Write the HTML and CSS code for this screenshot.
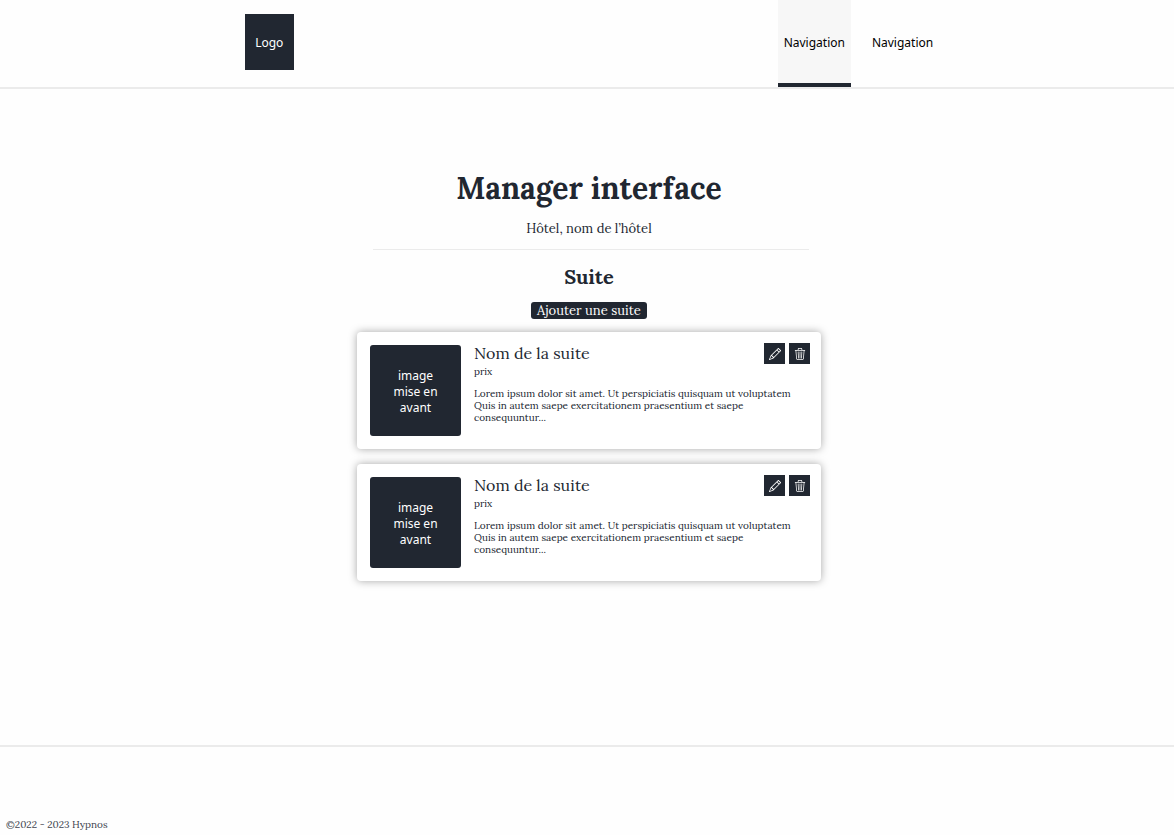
FILE: index.html
```html
<!DOCTYPE html>
<html lang="fr">
<head>
<meta charset="utf-8">
<meta name="viewport" content="width=device-width, initial-scale=1">
<title>Manager interface - Hypnos</title>
<link rel="stylesheet" href="styles.css">
</head>
<body>
<svg class="sprite" aria-hidden="true">
  <symbol id="pencil" viewBox="0 0 16 16"><path d="M12.146.146a.5.5 0 0 1 .708 0l3 3a.5.5 0 0 1 0 .708l-10 10a.5.5 0 0 1-.168.11l-5 2a.5.5 0 0 1-.65-.65l2-5a.5.5 0 0 1 .11-.168l10-10zM11.207 2.5 13.5 4.793 14.793 3.5 12.5 1.207 11.207 2.5zm1.586 3L10.5 3.207 4 9.707V10h.5a.5.5 0 0 1 .5.5v.5h.5a.5.5 0 0 1 .5.5v.5h.293l6.5-6.5zm-9.761 5.175-.106.106-1.528 3.821 3.821-1.528.106-.106A.5.5 0 0 1 5 12.5V12h-.5a.5.5 0 0 1-.5-.5V11h-.5a.5.5 0 0 1-.468-.325z"/></symbol>
  <symbol id="trash" viewBox="0 0 16 16"><path d="M6.5 1h3a.5.5 0 0 1 .5.5v1H6v-1a.5.5 0 0 1 .5-.5ZM11 2.5v-1A1.5 1.5 0 0 0 9.5 0h-3A1.5 1.5 0 0 0 5 1.500v1H2.506a.58.58 0 0 0-.01 0H1.500a.5.5 0 0 0 0 1h.538l.853 10.660A2 2 0 0 0 4.885 16h6.230a2 2 0 0 0 1.994-1.840l.853-10.660h.538a.5.5 0 0 0 0-1h-.995a.59.59 0 0 0-.01 0H11Zm1.958 1-.846 10.580a1 1 0 0 1-.997.920h-6.230a1 1 0 0 1-.997-.920L3.042 3.500h9.916Zm-7.487 1a.5.5 0 0 1 .528.470l.5 8.500a.5.5 0 0 1-.998.060L5 5.030a.5.5 0 0 1 .470-.530Zm5.058 0a.5.5 0 0 1 .470.530l-.5 8.500a.5.5 0 1 1-.998-.060l.5-8.500a.5.5 0 0 1 .528-.470ZM8 4.500a.5.5 0 0 1 .5.5v8.500a.5.5 0 0 1-1 0V5a.5.5 0 0 1 .5-.5Z"/></symbol>
</svg>
<header class="header">
  <div class="header-inner">
    <a class="logo" href="#">Logo</a>
    <nav class="nav">
      <a class="nav-link active" href="#" aria-current="page">Navigation</a>
      <a class="nav-link" href="#">Navigation</a>
    </nav>
  </div>
</header>
<main class="main">
  <h1 class="title">Manager interface</h1>
  <p class="hotel">Hôtel, nom de l’hôtel</p>
  <hr class="divider">
  <h2 class="subtitle">Suite</h2>
  <button class="add" type="button">Ajouter une suite</button>
  <div class="cards">
    <article class="card">
      <div class="thumb">image mise en avant</div>
      <div class="info">
        <div class="card-head">
          <div>
            <h3 class="name">Nom de la suite</h3>
            <p class="price">prix</p>
          </div>
          <div class="actions">
            <button class="action" type="button" aria-label="Modifier"><svg class="icon"><use href="#pencil"/></svg></button>
            <button class="action" type="button" aria-label="Supprimer"><svg class="icon"><use href="#trash"/></svg></button>
          </div>
        </div>
        <p class="text">Lorem ipsum dolor sit amet. Ut perspiciatis quisquam ut voluptatem<br>Quis in autem saepe exercitationem praesentium et saepe<br>consequuntur...</p>
      </div>
    </article>
    <article class="card">
      <div class="thumb">image mise en avant</div>
      <div class="info">
        <div class="card-head">
          <div>
            <h3 class="name">Nom de la suite</h3>
            <p class="price">prix</p>
          </div>
          <div class="actions">
            <button class="action" type="button" aria-label="Modifier"><svg class="icon"><use href="#pencil"/></svg></button>
            <button class="action" type="button" aria-label="Supprimer"><svg class="icon"><use href="#trash"/></svg></button>
          </div>
        </div>
        <p class="text">Lorem ipsum dolor sit amet. Ut perspiciatis quisquam ut voluptatem<br>Quis in autem saepe exercitationem praesentium et saepe<br>consequuntur...</p>
      </div>
    </article>
  </div>
</main>
<footer class="footer">©2022 - 2023 Hypnos</footer>
</body>
</html>
```

FILE: styles.css
```css
* {
  box-sizing: border-box;
}

body {
  display: flex;
  flex-direction: column;
  min-height: 100vh;
  margin: 0;
  background: #fefefe;
  color: #212731;
  font-family: Lora, "Liberation Serif", serif;
}

.sprite {
  display: none;
}

.header {
  border-bottom: 2px solid #ebebeb;
}

.header-inner {
  display: flex;
  justify-content: space-between;
  width: 60%;
  min-height: 87px;
  margin: 0 auto;
  padding-left: 10px;
  font: 12px/16px "Noto Sans", sans-serif;
}

.logo {
  display: grid;
  place-items: center;
  width: 49px;
  margin: 14px 0 17px;
  padding-top: 2px;
  background: #212731;
  color: #fff;
  text-decoration: none;
}

.nav {
  display: flex;
  gap: 15px;
}

.nav-link {
  display: flex;
  align-items: center;
  padding: 2px 6px 0;
  border-bottom: 4px solid transparent;
  color: #000;
  text-decoration: none;
}

.nav-link.active {
  border-color: #212731;
  background: #f7f7f7;
}

.main {
  display: flex;
  flex: 1;
  flex-direction: column;
  align-items: center;
  padding: 79px 0 80px 4px;
}

.title {
  margin: 0;
  font-size: 30px;
  line-height: 40px;
}

.hotel {
  margin: 11px 0 10px;
  font-size: 13px;
  line-height: 20px;
}

.divider {
  width: 436px;
  max-width: 100%;
  margin: 0 0 0 4px;
  border: 0;
  border-top: 1px solid #ebebeb;
}

.subtitle {
  margin: 14px 0 12px;
  font-size: 20px;
  line-height: 26px;
}

.add {
  padding: 0 6px;
  border: 0;
  border-radius: 3px;
  background: #212731;
  color: #fff;
  font: 13px/17px Lora, "Liberation Serif", serif;
}

.cards {
  display: grid;
  gap: 15px;
  width: 464px;
  max-width: 100%;
  margin-top: 13px;
}

.card {
  display: flex;
  gap: 13px;
  padding: 11px 11px 13px 13px;
  border-radius: 4px;
  background: #fff;
  box-shadow: 0 0 8px rgba(0, 0, 0, 0.35);
}

.thumb {
  display: grid;
  flex: none;
  place-items: center;
  width: 91px;
  height: 91px;
  margin-top: 2px;
  padding: 2px 20px 0;
  border-radius: 3px;
  background: #212731;
  color: #fff;
  font: 12px/16px "Noto Sans", sans-serif;
  text-align: center;
}

.info {
  flex: 1;
  min-width: 0;
}

.card-head {
  display: flex;
  justify-content: space-between;
}

.name {
  margin: 0;
  font-size: 16px;
  font-weight: 400;
  line-height: 21px;
}

.price {
  margin: 1px 0 9px;
  font-size: 10px;
  line-height: 14px;
}

.text {
  margin: 0;
  font-size: 10px;
  line-height: 12px;
}

.actions {
  display: flex;
  gap: 4px;
  align-self: flex-start;
}

.action {
  display: grid;
  place-items: center;
  width: 21px;
  height: 21px;
  padding: 0;
  border: 0;
  background: #212731;
  color: #fff;
}

.icon {
  width: 12px;
  height: 12px;
  fill: currentColor;
}

.footer {
  display: flex;
  align-items: flex-end;
  min-height: 90px;
  padding: 0 6px 3px;
  border-top: 2px solid #ebebeb;
  color: #414650;
  font-size: 10px;
  line-height: 14px;
}
```
